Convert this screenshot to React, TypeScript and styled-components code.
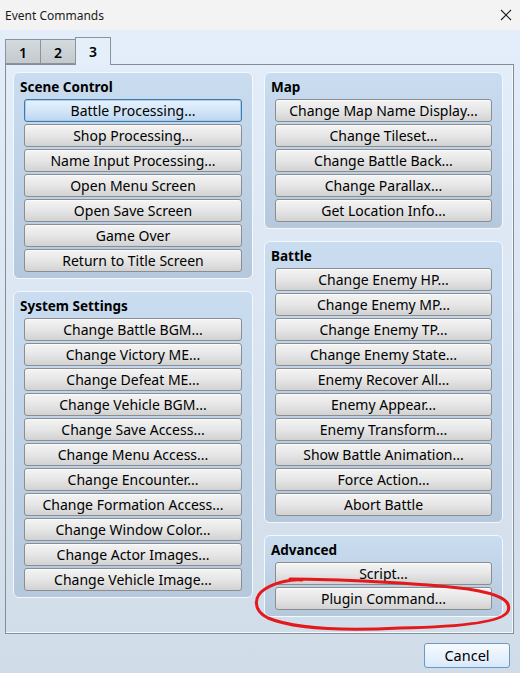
import React from 'react';
import styled, { createGlobalStyle } from 'styled-components';

const GlobalStyle = createGlobalStyle`
  html, body {
    margin: 0;
    padding: 0;
  }
  body {
    font-family: 'Noto Sans', 'Open Sans', sans-serif;
    color: #000000;
  }
`

const Window = styled.div`
  position: relative;
  width: 520px;
  height: 673px;
  display: flex;
  flex-direction: column;
  overflow: hidden;
  background: #f3f3f3;
`

const TitleBar = styled.div`
  height: 30px;
  flex: 0 0 30px;
  display: flex;
  align-items: center;
  justify-content: space-between;
  padding: 0 8px 0 5px;
  box-sizing: border-box;
  background: #f3f3f3;
`

const TitleText = styled.span`
  font-size: 12px;
  color: #1a1a1a;
`

const Body = styled.div`
  flex: 1;
  display: flex;
  flex-direction: column;
  padding: 7px 7px 0 5px;
  background: linear-gradient(to bottom, #e4eefa 0%, #dae5f1 50%, #d0dce7 100%);
`

const TabRow = styled.div`
  display: flex;
  align-items: flex-end;
  height: 27px;
`

const Tab = styled.div<{ $active?: boolean }>`
  position: relative;
  z-index: ${p => (p.$active ? 2 : 1)};
  width: 36px;
  height: ${p => (p.$active ? '28px' : '25px')};
  margin-bottom: ${p => (p.$active ? '-1px' : '0')};
  margin-left: -1px;
  box-sizing: border-box;
  border: 1px solid #8a949e;
  border-bottom: ${p => (p.$active ? 'none' : '1px solid #8a949e')};
  background: ${p =>
    p.$active ? '#e5effa' : 'linear-gradient(to bottom, #d5dadf, #c4c9ce)'};
  display: flex;
  align-items: center;
  justify-content: center;
  font-size: 14px;
  font-weight: 600;
  padding-top: ${p => (p.$active ? '0' : '1px')};
  &:first-child {
    margin-left: 0;
  }
`

const TabPanel = styled.div`
  width: 509px;
  height: 570px;
  box-sizing: border-box;
  border: 1px solid #838e99;
  box-shadow: inset -1px -1px 0 #f4f8fc;
  padding: 7px 10px 7px 7px;
  display: grid;
  grid-template-columns: 240px 239px;
  column-gap: 11px;
  align-items: start;
`

const Column = styled.div`
  display: flex;
  flex-direction: column;
  gap: 12px;
`

const Group = styled.div`
  box-sizing: border-box;
  border: 1px solid #f3f8fd;
  border-radius: 6px;
  background: linear-gradient(to bottom, #cadcef, #b5c8dc);
  padding: 4px 10px 6px 10px;
`

const GroupTitle = styled.div`
  font-size: 13.5px;
  font-weight: 700;
  line-height: 20px;
  margin: 0 0 2px -4px;
`

const ButtonList = styled.div`
  display: flex;
  flex-direction: column;
  gap: 2px;
`

const CommandButton = styled.button<{ $focused?: boolean }>`
  height: 23px;
  width: 100%;
  box-sizing: border-box;
  margin: 0;
  padding: 1px 0 0;
  border-radius: 3px;
  border: 1px solid ${p => (p.$focused ? '#3d7bad' : '#8a8e93')};
  background: ${p =>
    p.$focused
      ? 'linear-gradient(to bottom, #e8f2fd 0%, #d3e6f8 50%, #bcd6ef 100%)'
      : 'linear-gradient(to bottom, #f4f4f4 0%, #e6e6e6 50%, #d2d2d2 100%)'};
  box-shadow: ${p => (p.$focused ? 'inset 0 0 0 1px #a9cdef' : 'inset 0 1px 0 #fbfbfb')};
  font-family: 'Noto Sans', 'Open Sans', sans-serif;
  font-size: 14px;
  line-height: 20px;
  color: #000000;
  text-align: center;
  white-space: nowrap;
`

const Footer = styled.div`
  display: flex;
  justify-content: flex-end;
  padding: 9px 3px 0 0;
`

const CancelButton = styled.button`
  width: 86px;
  height: 25px;
  box-sizing: border-box;
  margin: 0;
  padding: 0 0 1px;
  border-radius: 3px;
  border: 1px solid #6c98c4;
  background: linear-gradient(to bottom, #f6faff 0%, #e8f2fd 50%, #d8e9fb 100%);
  font-family: 'Noto Sans', 'Open Sans', sans-serif;
  font-size: 14.5px;
  color: #000000;
`

const Scribble = styled.svg`
  position: absolute;
  left: 0;
  top: 0;
  pointer-events: none;
`

const sceneControl = [
  'Battle Processing...',
  'Shop Processing...',
  'Name Input Processing...',
  'Open Menu Screen',
  'Open Save Screen',
  'Game Over',
  'Return to Title Screen',
]

const systemSettings = [
  'Change Battle BGM...',
  'Change Victory ME...',
  'Change Defeat ME...',
  'Change Vehicle BGM...',
  'Change Save Access...',
  'Change Menu Access...',
  'Change Encounter...',
  'Change Formation Access...',
  'Change Window Color...',
  'Change Actor Images...',
  'Change Vehicle Image...',
]

const map = [
  'Change Map Name Display...',
  'Change Tileset...',
  'Change Battle Back...',
  'Change Parallax...',
  'Get Location Info...',
]

const battle = [
  'Change Enemy HP...',
  'Change Enemy MP...',
  'Change Enemy TP...',
  'Change Enemy State...',
  'Enemy Recover All...',
  'Enemy Appear...',
  'Enemy Transform...',
  'Show Battle Animation...',
  'Force Action...',
  'Abort Battle',
]

const advanced = ['Script...', 'Plugin Command...']

function CommandGroup({ title, items, focused }: { title: string; items: string[]; focused?: string }) {
  return (
    <Group>
      <GroupTitle>{title}</GroupTitle>
      <ButtonList>
        {items.map(item => (
          <CommandButton key={item} $focused={item === focused}>
            {item}
          </CommandButton>
        ))}
      </ButtonList>
    </Group>
  )
}

function App() {
  return (
    <>
      <GlobalStyle />
      <Window>
        <TitleBar>
          <TitleText>Event Commands</TitleText>
          <svg width="12" height="12" viewBox="0 0 12 12">
            <path d="M1 1 L11 11 M11 1 L1 11" stroke="#1e1e1e" strokeWidth="1.1" fill="none" />
          </svg>
        </TitleBar>
        <Body>
          <TabRow>
            <Tab>1</Tab>
            <Tab>2</Tab>
            <Tab $active>3</Tab>
          </TabRow>
          <TabPanel>
            <Column>
              <CommandGroup title="Scene Control" items={sceneControl} focused="Battle Processing..." />
              <CommandGroup title="System Settings" items={systemSettings} />
            </Column>
            <Column>
              <CommandGroup title="Map" items={map} />
              <CommandGroup title="Battle" items={battle} />
              <CommandGroup title="Advanced" items={advanced} />
            </Column>
          </TabPanel>
          <Footer>
            <CancelButton>Cancel</CancelButton>
          </Footer>
        </Body>
        <Scribble width="520" height="673" viewBox="0 0 520 673">
          <path
            d="M290 579 C 330 579, 420 583, 468 589 C 500 594, 512 601, 508 611 C 503 623, 455 627, 400 628 C 340 631, 292 628, 268 618 C 252 610, 254 596, 265 589 C 276 582, 292 579, 302 580"
            stroke="#e3191c"
            strokeWidth="3"
            strokeLinecap="round"
            fill="none"
          />
        </Scribble>
      </Window>
    </>
  );
}

export default App;
